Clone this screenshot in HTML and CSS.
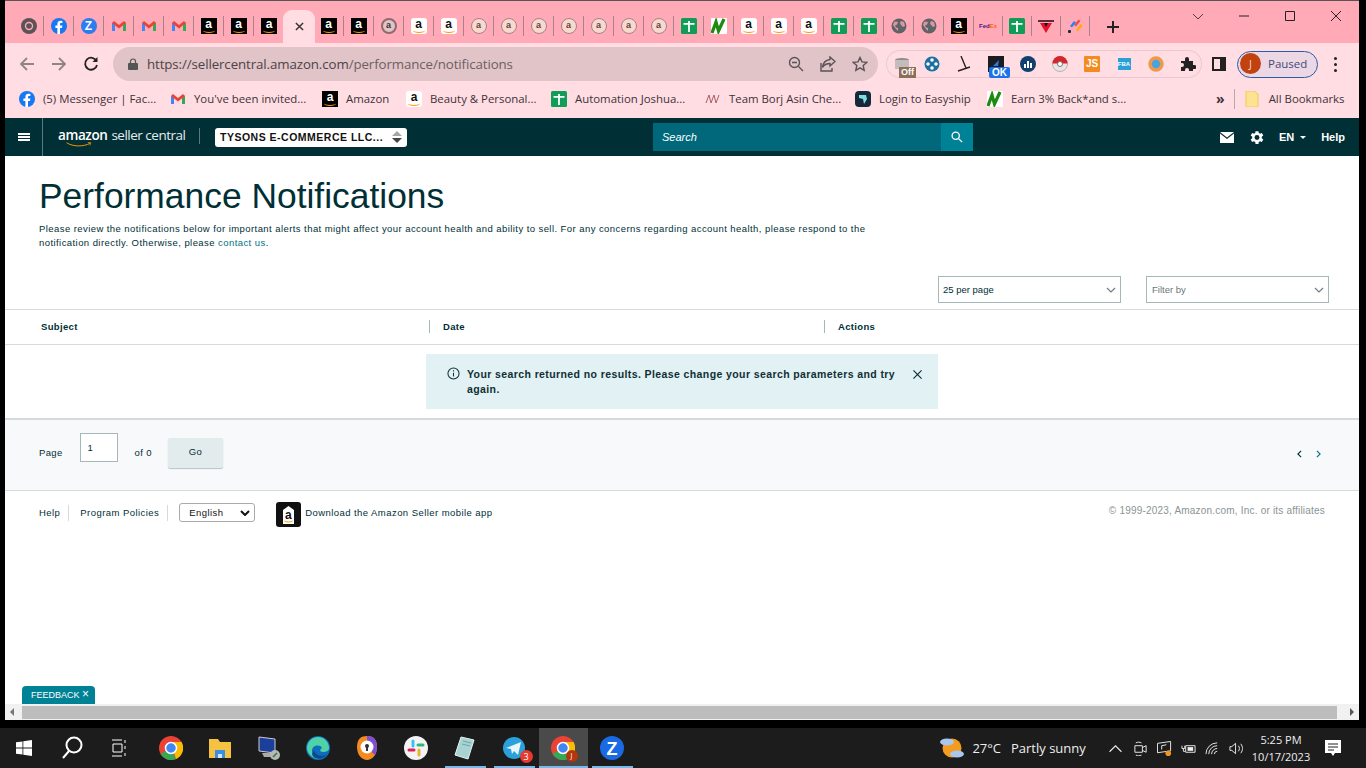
FILE: index.html
```html
<!DOCTYPE html>
<html lang="en">
<head>
  <meta charset="UTF-8" />
  <title>Performance Notifications</title>
  <link rel="stylesheet" href="styles.css">
</head>
<body>
  <!-- shared favicons -->
  <svg class="defs" width="0" height="0">
    <symbol id="i-chrome" viewBox="0 0 16 16"><circle cx="8" cy="8" r="8" fill="#5b5356"/><circle cx="8" cy="8" r="4.2" fill="#ffaab6"/><circle cx="8" cy="8" r="2.8" fill="#5b5356"/></symbol>
    <symbol id="i-fb" viewBox="0 0 16 16"><circle cx="8" cy="8" r="8" fill="#1877f2"/><path d="M9 16V10h2l.4-2.4H9V6.2c0-.8.3-1.2 1.2-1.2h1.2V3c-.5-.1-1.2-.2-1.9-.2-1.9 0-3.1 1.1-3.1 3.2v1.6H4.4V10h2V16z" fill="#fff"/></symbol>
    <symbol id="i-gmail" viewBox="0 0 16 16"><path d="M1 4.5V13h3V7z" fill="#4285f4"/><path d="M15 4.5V13h-3V7z" fill="#34a853"/><path d="M1 5 3 3l5 4 5-4 2 2-7 5.5z" fill="#ea4335"/></symbol>
    <symbol id="i-sheet" viewBox="0 0 16 16"><rect width="16" height="16" rx="1.5" fill="#0f9d58"/><path d="M2.5 5h4.600V3h1.800v2h4.600v1.800H8.900V14H7.100V6.800H2.500z" fill="#fff"/></symbol>
    <symbol id="i-wave" viewBox="0 0 16 16"><rect width="16" height="16" rx="1" fill="#fff"/><path d="M1 15 5 4l2.500 9L13 1" fill="none" stroke="#1d8a12" stroke-width="3.200"/></symbol>
    <symbol id="i-globe" viewBox="0 0 16 16"><circle cx="8" cy="8" r="7.5" fill="#5f6368"/><path d="M3 4c2-1 3-.5 4 .5l-1 2-2 1 1 2 2 .5v3L5 11 2 7zM10 3l3 1 1 4-2 1-2-2-1-2z" fill="#ffaab6" opacity=".75"/></symbol>
    <symbol id="i-tri" viewBox="0 0 16 16"><path d="M0 2h16v2H0z" fill="#5a2b40"/><path d="M2 5h12L8 15z" fill="#e8112d"/><path d="M6 5h4L8 9z" fill="#111"/></symbol>
    <symbol id="i-jira" viewBox="0 0 16 16"><path d="M7 7 11.5 1.500l2 1.500L9 8.500z" fill="#f44e3b"/><path d="M3 8 7 3l2 1.500L5 9.500z" fill="#2684ff"/><path d="M9 12l5-6 1.500 1.500-5 6z" fill="#ffab00"/><rect x="1" y="12" width="3" height="3" rx="1" fill="#172b4d"/></symbol>
    <symbol id="i-smile" viewBox="0 0 44 8"><path d="M1 1c11 7 28 7 40 1" fill="none" stroke="#f90" stroke-width="1.6"/><path d="M37 .5l5 .5-1.500 4.500" fill="none" stroke="#f90" stroke-width="1.2"/></symbol>
  </svg>

  <div class="screen">
    <div class="window">
      <div class="tabstrip">
        <div class="tab"><svg class="fav"><use href="#i-chrome"/></svg></div>
        <div class="tab"><svg class="fav"><use href="#i-fb"/></svg></div>
        <div class="tab"><span class="fav-zoom">Z</span></div>
        <div class="tab"><svg class="fav"><use href="#i-gmail"/></svg></div>
        <div class="tab"><svg class="fav"><use href="#i-gmail"/></svg></div>
        <div class="tab"><svg class="fav"><use href="#i-gmail"/></svg></div>
        <div class="tab"><span class="fav-a black">a</span></div>
        <div class="tab"><span class="fav-a black">a</span></div>
        <div class="tab no-sep"><span class="fav-a black">a</span></div>
        <div class="tab active">
          <svg class="tab-close" viewBox="0 0 10 10"><path d="M1 1l8 8M9 1l-8 8"/></svg>
        </div>
        <div class="tab"><span class="fav-a black">a</span></div>
        <div class="tab"><span class="fav-a black">a</span></div>
        <div class="tab"><span class="fav-a ring dark">a</span></div>
        <div class="tab"><span class="fav-a white">a</span></div>
        <div class="tab"><span class="fav-a white">a</span></div>
        <div class="tab"><span class="fav-a ring">a</span></div>
        <div class="tab"><span class="fav-a ring">a</span></div>
        <div class="tab"><span class="fav-a ring">a</span></div>
        <div class="tab"><span class="fav-a ring">a</span></div>
        <div class="tab"><span class="fav-a ring">a</span></div>
        <div class="tab"><span class="fav-a ring">a</span></div>
        <div class="tab"><span class="fav-a ring">a</span></div>
        <div class="tab"><svg class="fav"><use href="#i-sheet"/></svg></div>
        <div class="tab"><svg class="fav"><use href="#i-wave"/></svg></div>
        <div class="tab"><span class="fav-a white">a</span></div>
        <div class="tab"><span class="fav-a white">a</span></div>
        <div class="tab"><span class="fav-a white">a</span></div>
        <div class="tab"><svg class="fav"><use href="#i-sheet"/></svg></div>
        <div class="tab"><svg class="fav"><use href="#i-sheet"/></svg></div>
        <div class="tab"><svg class="fav"><use href="#i-globe"/></svg></div>
        <div class="tab"><svg class="fav"><use href="#i-globe"/></svg></div>
        <div class="tab"><span class="fav-a black">a</span></div>
        <div class="tab narrow"><span class="fav-fedex">Fed<b>Ex</b></span></div>
        <div class="tab narrow"><svg class="fav"><use href="#i-sheet"/></svg></div>
        <div class="tab narrow"><svg class="fav"><use href="#i-tri"/></svg></div>
        <div class="tab narrow"><svg class="fav"><use href="#i-jira"/></svg></div>
        <svg class="new-tab" viewBox="0 0 12 12"><path d="M6 0v12M0 6h12"/></svg>
        <div class="win-controls">
          <div class="win-btn"><svg viewBox="0 0 10 10"><path d="M0 3l5 5 5-5"/></svg></div>
          <div class="win-btn"><svg viewBox="0 0 10 10"><path d="M0 5h10"/></svg></div>
          <div class="win-btn"><svg viewBox="0 0 10 10"><path d="M.5.5h9v9h-9z"/></svg></div>
          <div class="win-btn"><svg viewBox="0 0 10 10"><path d="M0 0l10 10M10 0L0 10"/></svg></div>
        </div>
      </div>

      <div class="toolbar">
        <svg class="tool-btn dim" viewBox="0 0 16 16"><path d="M15 8H2M8 2L2 8l6 6"/></svg>
        <svg class="tool-btn dim" viewBox="0 0 16 16"><path d="M1 8h13M8 2l6 6-6 6"/></svg>
        <svg class="tool-btn" viewBox="0 0 16 16"><path d="M13.5 5A6 6 0 1 0 14 9"/><path class="solid" d="M14.5 1v5h-5z"/></svg>
        <div class="omnibox">
          <svg class="lock" viewBox="0 0 10 12"><path d="M2.5 5V3.500a2.500 2.500 0 0 1 5 0V5" fill="none" stroke="#555" stroke-width="1.2"/><rect y="5" width="10" height="7" rx="1" fill="#555"/></svg>
          <span class="url"><span class="url-host">https://sellercentral.amazon.com</span>/performance/notifications</span>
          <svg class="omni-icon" viewBox="0 0 16 16"><circle cx="6.5" cy="6.5" r="5"/><path d="M10.5 10.5L15 15M4 6.500h5"/></svg>
          <svg class="omni-icon" viewBox="0 0 16 16"><path d="M10 1l5 4.500L10 10V7.500C6 7.500 4 9 2.500 11.500 3 7 6 4 10 3.500z"/><path d="M1 7v8h11v-3"/></svg>
          <svg class="omni-icon" viewBox="0 0 16 16"><path d="M8 1.500l2 4.400 4.800.5-3.600 3.200 1 4.700L8 11.900l-4.200 2.400 1-4.700L1.200 6.400 6 5.900z"/></svg>
        </div>
        <div class="ext-pill">
          <div class="ext ext-first">
            <svg viewBox="0 0 16 16"><ellipse cx="8" cy="4" rx="7" ry="2" fill="#8c8c8c"/><rect x="1" y="4" width="14" height="9" fill="#c4bcbc"/></svg>
            <span class="badge badge-off">Off</span>
          </div>
          <div class="ext"><svg viewBox="0 0 16 16"><circle cx="8" cy="8" r="7.5" fill="#1d6f9f"/><circle cx="8" cy="4" r="1.8" fill="#fff"/><circle cx="8" cy="12" r="1.8" fill="#fff"/><circle cx="4" cy="8" r="1.8" fill="#fff"/><circle cx="12" cy="8" r="1.8" fill="#fff"/></svg></div>
          <div class="ext"><svg viewBox="0 0 16 16"><path d="M5 0l5 12M2 15l12-4" fill="none" stroke="#222" stroke-width="1.4"/></svg></div>
          <div class="ext">
            <svg viewBox="0 0 16 16"><rect width="16" height="16" fill="#1b1b22"/><path d="M5 10l6-6-1 6z" fill="#2a7fd5"/></svg>
            <span class="badge badge-ok">OK</span>
          </div>
          <div class="ext"><svg viewBox="0 0 16 16"><circle cx="8" cy="8" r="8" fill="#123f6d"/><path d="M4 8h2v4H4zM7 5h2v7H7zM10 7h2v5h-2z" fill="#fff"/></svg></div>
          <div class="ext"><svg viewBox="0 0 16 16"><circle cx="8" cy="8" r="7.5" fill="#e9e4e5" stroke="#b9b0b2"/><path d="M.5 7.500a7.500 7.500 0 0 1 15 0z" fill="#d8232a"/><circle cx="8" cy="8" r="2.5" fill="#fff" stroke="#777"/></svg></div>
          <div class="ext"><span class="js-box">JS</span></div>
          <div class="ext"><span class="fba-box">FBA</span></div>
          <div class="ext"><svg viewBox="0 0 16 16"><circle cx="8" cy="8" r="6" fill="#4aa3df" stroke="#ec9a4c" stroke-width="3.5"/></svg></div>
          <div class="ext"><svg viewBox="0 0 16 16"><path d="M1 5h4V3a2 2 0 0 1 4 0v2h4v4h1.500a2 2 0 0 1 0 4H13v2H9v-1a2 2 0 0 0-4 0v1H1v-4h1a2 2 0 0 0 0-4H1z" fill="#222"/></svg></div>
        </div>
        <svg class="side-panel" viewBox="0 0 14 14"><path d="M0 0h14v14H0z" fill="#222"/><path d="M2 2h6v10H2z" fill="#ffdde3"/></svg>
        <div class="profile">
          <span class="avatar">J</span>
          <span class="paused">Paused</span>
        </div>
        <div class="kebab"><i></i><i></i><i></i></div>
      </div>

      <div class="bookmarks">
        <div class="bm"><svg class="fav"><use href="#i-fb"/></svg><span>(5) Messenger | Fac...</span></div>
        <div class="bm"><svg class="fav"><use href="#i-gmail"/></svg><span>You've been invited...</span></div>
        <div class="bm"><span class="fav-a black">a</span><span>Amazon</span></div>
        <div class="bm"><span class="fav-a white">a</span><span>Beauty &amp; Personal...</span></div>
        <div class="bm"><svg class="fav"><use href="#i-sheet"/></svg><span>Automation Joshua...</span></div>
        <div class="bm"><svg class="fav" viewBox="0 0 16 16"><path d="M1 12l3-8 2 8 3-8 2 8 3-8" fill="none" stroke="#a6606a" stroke-width="1"/></svg><span>Team Borj Asin Che...</span></div>
        <div class="bm"><svg class="fav" viewBox="0 0 16 16"><rect width="16" height="16" rx="4" fill="#14293b"/><path d="M4 4h7l1 4-3 5-1-5-4-1z" fill="#7fdde0"/></svg><span>Login to Easyship</span></div>
        <div class="bm"><svg class="fav"><use href="#i-wave"/></svg><span>Earn 3% Back*and s...</span></div>
        <div class="bm-end">
          <span class="more">»</span>
          <span class="bm-sep"></span>
          <svg class="fav" viewBox="0 0 16 16"><path d="M2 0h8l4 3v13H2z" fill="#fde293" stroke="#f2c94c"/></svg>
          <span>All Bookmarks</span>
        </div>
      </div>

      <header class="nav">
        <div class="nav-menu"><span class="burger"><i></i><i></i><i></i></span></div>
        <div class="logo">
          <span class="logo-amazon">amazon<svg class="logo-smile"><use href="#i-smile"/></svg></span>
          <span class="logo-rest">seller central</span>
        </div>
        <div class="acct">
          <span class="acct-name">TYSONS E-COMMERCE LLC...</span>
          <span class="acct-arrows"><i class="up"></i><i class="down"></i></span>
        </div>
        <div class="search">
          <span class="search-text">Search</span>
          <span class="search-btn">
            <svg viewBox="0 0 14 14"><circle cx="5.5" cy="5.5" r="4.2"/><path d="M8.7 8.700L13 13"/></svg>
          </span>
        </div>
        <div class="nav-right">
          <svg class="nav-mail" viewBox="0 0 14 11"><path d="M0 0h14L7 5.500z"/><path d="M0 1.500v9.500h14V1.500L7 7z"/></svg>
          <svg class="nav-gear" viewBox="0 0 24 24"><path d="M19.4 13a7.500 7.500 0 0 0 0-2l2.200-1.700-2.100-3.600-2.600 1a7.500 7.500 0 0 0-1.700-1L14.800 3h-4.200l-.4 2.700a7.500 7.500 0 0 0-1.700 1l-2.600-1-2.100 3.600L6 11a7.500 7.500 0 0 0 0 2l-2.200 1.700 2.100 3.600 2.600-1a7.500 7.500 0 0 0 1.700 1l.4 2.700h4.200l.4-2.700a7.500 7.500 0 0 0 1.700-1l2.600 1 2.100-3.600zM12.700 15.500a3.500 3.500 0 1 1 0-7 3.500 3.500 0 0 1 0 7z" fill-rule="evenodd"/></svg>
          <span class="nav-lang">EN</span><span class="caret"></span>
          <span class="nav-help">Help</span>
        </div>
      </header>

      <main class="content">
        <div class="head">
          <h1>Performance Notifications</h1>
          <p class="intro">Please review the notifications below for important alerts that might affect your account health and ability to sell. For any concerns regarding account health, please respond to the notification directly. Otherwise, please <a href="#">contact us</a>.</p>
        </div>

        <div class="filters">
          <div class="dropdown"><span>25 per page</span><svg viewBox="0 0 10 6"><path d="M1 1l4 4 4-4"/></svg></div>
          <div class="dropdown muted"><span>Filter by</span><svg viewBox="0 0 10 6"><path d="M1 1l4 4 4-4"/></svg></div>
        </div>

        <div class="table-head">
          <div class="col col-subject">Subject</div>
          <div class="col col-date">Date</div>
          <div class="col col-actions">Actions</div>
        </div>

        <div class="results">
          <div class="alert">
            <svg class="alert-info" viewBox="0 0 14 14"><circle cx="7" cy="7" r="6"/><path d="M7 6.300v4M7 3.500v1.300"/></svg>
            <p>Your search returned no results. Please change your search parameters and try again.</p>
            <svg class="alert-close" viewBox="0 0 10 10"><path d="M.5.500l9 9M9.500.500l-9 9"/></svg>
          </div>
        </div>

        <div class="pager">
          <span>Page</span>
          <span class="page-input">1</span>
          <span class="page-of">of 0</span>
          <span class="go-btn">Go</span>
          <div class="pager-arrows">
            <svg class="arrow-prev" viewBox="0 0 6 10"><path d="M5 1L1 5l4 4"/></svg>
            <svg class="arrow-next" viewBox="0 0 6 10"><path d="M1 1l4 4-4 4"/></svg>
          </div>
        </div>

        <footer class="foot">
          <a href="#" class="foot-link">Help</a>
          <a href="#" class="foot-link">Program Policies</a>
          <div class="lang-select"><span>English</span><svg viewBox="0 0 10 6"><path d="M1 1l4 4 4-4"/></svg></div>
          <svg class="app-icon" viewBox="0 0 25 25">
            <rect width="25" height="25" rx="3" fill="#111"/>
            <path d="M7 8l5.500-4L18 8v14H7z" fill="#fff"/>
            <text x="12.5" y="17" text-anchor="middle" class="sym-bold" font-size="12" fill="#111">a</text>
            <path d="M8.500 19c2 1.300 6 1.300 8 0" fill="none" stroke="#f90"/>
          </svg>
          <span class="app-text">Download the Amazon Seller mobile app</span>
          <span class="copyright">© 1999-2023, Amazon.com, Inc. or its affiliates</span>
        </footer>

        <div class="feedback">FEEDBACK <span>×</span></div>
      </main>

      <div class="hscroll">
        <span class="scroll-arrow left"></span>
        <span class="scroll-thumb"></span>
        <span class="scroll-arrow right"></span>
      </div>
    </div>

    <div class="taskbar">
      <div class="task-apps">
        <div class="task sys"><svg viewBox="0 0 16 16" class="win-logo"><path d="M0 2.300l6.500-.9v6.200H0zM7.300 1.300L16 0v7.600H7.300zM0 8.400h6.500v6.200L0 13.700zM7.300 8.400H16V16l-8.700-1.200z"/></svg></div>
        <div class="task sys"><svg viewBox="0 0 22 24" class="t-search"><circle cx="13" cy="9" r="7.5"/><path d="M8 15l-6 7"/></svg></div>
        <div class="task sys"><svg viewBox="0 0 16 18" class="t-view"><path d="M0 1h10M0 17h10M1 5h9v8H1zM13 1v3M13 7v3M13 14v3"/></svg></div>
        <div class="task first-app"><svg viewBox="0 0 24 24"><circle cx="12" cy="12" r="12" fill="#ea4335"/><path d="M12 12L1.500 18A12 12 0 0 0 17 23z" fill="#34a853"/><path d="M12 6h10.500A12 12 0 0 1 17 23z" fill="#fbbc05"/><circle cx="12" cy="12" r="5.5" fill="#4285f4" stroke="#fff" stroke-width="1.5"/></svg></div>
        <div class="task"><svg viewBox="0 0 24 24"><path d="M1 3h9l2 3h11v16H1z" fill="#f5c242"/><path d="M7 14h10v8H7z" fill="#3a8ee6"/><path d="M10 18h4v4h-4z" fill="#cfe6fb"/></svg></div>
        <div class="task"><svg viewBox="0 0 24 24"><path d="M2 1l16 2v14L2 15z" fill="#1c3f9c" stroke="#ccc"/><path d="M5 17h9l2 4H7z" fill="#aaa"/><circle cx="18" cy="19" r="5" fill="#b7b7b7"/><path d="M16 21l4-4" stroke="#2b7a2b" stroke-width="1.5"/></svg></div>
        <div class="task"><svg viewBox="0 0 24 24"><circle cx="12" cy="12" r="12" fill="#0f6cbd"/><path d="M1 12a11 11 0 0 1 22 0c0 3-3 4-6 4-4 0-3-3-1-4-2-4-10-3-10 3 0 3 2 7 7 8C7 23 1 18 1 12z" fill="#4fd2a8"/><path d="M8 14c1 5 8 8 13 4-4 6-14 6-15 0z" fill="#0b4b8c"/></svg></div>
        <div class="task"><svg viewBox="0 0 24 24"><path d="M12 0c6 0 10 3 10 11s-5 13-10 13S2 19 2 11 6 0 12 0z" fill="#f58a1f"/><path d="M12 0c6 0 10 3 10 11 0 3-1 6-2 8L12 12z" fill="#7d4fd3"/><circle cx="12" cy="11" r="6.5" fill="#fff"/><circle cx="12" cy="10" r="2" fill="#333"/><path d="M11 11h2v4h-2z" fill="#333"/></svg></div>
        <div class="task"><svg viewBox="0 0 24 24"><circle cx="12" cy="12" r="12" fill="#f4f4f4"/><path d="M9 5v5" stroke="#36c5f0" stroke-width="3" stroke-linecap="round"/><path d="M14 9h5" stroke="#2eb67d" stroke-width="3" stroke-linecap="round"/><path d="M15 19v-5" stroke="#ecb22e" stroke-width="3" stroke-linecap="round"/><path d="M5 14h5" stroke="#e01e5a" stroke-width="3" stroke-linecap="round"/></svg></div>
        <div class="task running"><svg viewBox="0 0 24 24"><path d="M8 1l13 3-6 19-13-4z" fill="#a9d3d3" stroke="#e6f2f2"/><path d="M10 5l8 2M9 8l8 2" stroke="#6fa3a3"/></svg></div>
        <div class="task running">
          <svg viewBox="0 0 24 24"><circle cx="12" cy="12" r="11" fill="#2aa1da"/><path d="M4 12l15-6-3 13-4-4-2 3-1-5z" fill="#e8f6fc"/></svg>
          <span class="task-badge">3</span>
        </div>
        <div class="task running current">
          <svg viewBox="0 0 24 24"><circle cx="12" cy="12" r="12" fill="#ea4335"/><path d="M12 12L1.500 18A12 12 0 0 0 17 23z" fill="#34a853"/><path d="M12 6h10.500A12 12 0 0 1 17 23z" fill="#fbbc05"/><circle cx="12" cy="12" r="5.5" fill="#4285f4" stroke="#fff" stroke-width="1.5"/></svg>
          <span class="task-avatar">J</span>
        </div>
        <div class="task running"><svg viewBox="0 0 24 24"><circle cx="12" cy="12" r="12" fill="#1a6ae4"/><text x="12" y="18.5" text-anchor="middle" class="sym-bold" font-size="18" fill="#fff">Z</text></svg></div>
      </div>

      <div class="tray">
        <svg class="weather" viewBox="0 0 26 24"><circle cx="13" cy="12" r="9.5" fill="#f39c1f"/><ellipse cx="8" cy="6" rx="7" ry="3.5" fill="#a9c6ee"/><ellipse cx="18" cy="18" rx="7" ry="3.5" fill="#a9c6ee"/></svg>
        <span class="temp">27°C</span>
        <span class="sky">Partly sunny</span>
        <svg class="tray-icon chevron" viewBox="0 0 12 7"><path d="M.5 6.500L6 1l5.500 5.500"/></svg>
        <svg class="tray-icon" viewBox="0 0 14 16"><path d="M1 5h8v7H1zM9 7l4-2v7l-4-2M2 2c2-1 4-1 6 0M2 15c2 1 4 1 6 0"/></svg>
        <svg class="tray-icon" viewBox="0 0 16 16"><path d="M.5 2.500l14-2v10l-14 2zM5 9V5l5-1"/><circle class="dot-orange" cx="12" cy="13" r="3"/></svg>
        <svg class="tray-icon" viewBox="0 0 16 12"><path d="M5 3h10v7H5zM1 3v3h3V3M2.500 6v3h2"/><path class="solid" d="M7 4.500h6v4H7z"/></svg>
        <svg class="tray-icon" viewBox="0 0 16 14"><path d="M1 13A12 12 0 0 1 13 1M4 13a9 9 0 0 1 9-9M7 13a6 6 0 0 1 6-6M10 13a3 3 0 0 1 3-3"/></svg>
        <svg class="tray-icon" viewBox="0 0 16 14"><path d="M1 5v4h2l4 3.500v-11L3 5zM10 4c1.500 2 1.500 4 0 6M12.500 2c2.500 3 2.500 7 0 10"/></svg>
        <div class="clock"><span>5:25 PM</span><span>10/17/2023</span></div>
        <svg class="notify" viewBox="0 0 16 16"><path d="M0 0h16v13h-6l-2 3-2-3H0z" fill="#fff"/><path d="M3 4h10M3 7h10M3 10h6" stroke="#222"/></svg>
      </div>
    </div>
  </div>
</body>
</html>
```

FILE: styles.css
```css
* {
  box-sizing: border-box;
}

html,
body {
  margin: 0;
  height: 100%;
  overflow: hidden;
  background: #000;
}

body {
  font-family: 'Liberation Sans', Arial, sans-serif;
  color: #002f36;
}

.defs {
  position: absolute;
}

.sym-bold {
  font-family: 'Liberation Sans', Arial, sans-serif;
  font-weight: bold;
}

.screen {
  width: 1366px;
  height: 768px;
  display: flex;
  flex-direction: column;
}

.window {
  width: 1354px;
  height: 720px;
  margin-left: 5px;
  margin-bottom: 8px;
  display: flex;
  flex-direction: column;
  background: #fff;
}

/* browser tabs */
.tabstrip {
  height: 43px;
  flex: none;
  display: flex;
  padding-left: 9px;
  background: #ffaab6;
  border-top: 1px solid #555;
}

.tab {
  width: 30px;
  height: 20px;
  margin-top: 15px;
  display: flex;
  align-items: center;
  justify-content: center;
  border-right: 1px solid #a8828a;
}

.tab.narrow {
  width: 29px;
}

.tab.no-sep {
  border-right: none;
}

.tab.active {
  height: 33px;
  margin-top: 9px;
  border-right: none;
  border-radius: 9px 9px 0 0;
  background: #ffdde3;
  width: 32px;
  margin-left: -1px;
  margin-right: -1px;
  position: relative;
}

.fav {
  width: 16px;
  height: 16px;
  flex: none;
}

/* favicons that carry a real letter */
.fav-a {
  width: 16px;
  height: 16px;
  flex: none;
  position: relative;
  text-align: center;
  font: bold 12px/13px 'Liberation Sans', sans-serif;
}

.fav-a::after {
  content: "";
  position: absolute;
  left: 2px;
  right: 2px;
  bottom: 1px;
  height: 4px;
  border-bottom: 1.5px solid #f90;
  border-radius: 50%;
}

.fav-a.black {
  background: #000;
  color: #fff;
}

.fav-a.white {
  background: #fff;
  color: #111;
  border-radius: 3px;
}

.fav-a.ring {
  border: 1.5px solid #a4828a;
  border-radius: 50%;
  background: #f9d8cd;
  color: #5a4648;
  font-size: 9px;
  line-height: 12px;
}

.fav-a.ring.dark {
  border: 2px solid #8d6a70;
  background: #e3c3c3;
  color: #333;
  line-height: 11px;
}

.fav-a.ring::after {
  display: none;
}

.fav-zoom {
  width: 16px;
  height: 16px;
  flex: none;
  border-radius: 50%;
  background: #2d7cf0;
  color: #fff;
  text-align: center;
  font: bold 12px/16px 'Liberation Sans', sans-serif;
}

.fav-fedex {
  width: 18px;
  flex: none;
  color: #4d148c;
  text-align: center;
  white-space: nowrap;
  font: bold 6px/16px 'Liberation Sans', sans-serif;
}

.fav-fedex b {
  color: #f60;
}

.tab-close {
  width: 9px;
  height: 9px;
  fill: none;
  stroke: #333;
  stroke-width: 1.6;
}

.new-tab {
  width: 12px;
  height: 12px;
  margin: 20px 0 0 17px;
  fill: none;
  stroke: #222;
  stroke-width: 2;
}

.win-controls {
  margin-left: auto;
  display: flex;
  align-self: flex-start;
}

.win-btn {
  width: 46px;
  height: 29px;
  display: flex;
  align-items: center;
  justify-content: center;
}

.win-btn svg {
  width: 10px;
  height: 10px;
  fill: none;
  stroke: #222;
  stroke-width: 1;
}

.win-btn:first-child svg {
  stroke-width: .8;
}

/* address bar */
.toolbar {
  height: 38px;
  flex: none;
  display: flex;
  align-items: center;
  padding: 4px 0 0 14px;
  background: #ffdde3;
  font-family: 'Open Sans', sans-serif;
}

.tool-btn {
  width: 16px;
  height: 16px;
  margin-right: 16px;
  fill: none;
  stroke: #222;
  stroke-width: 1.8;
}

.tool-btn.dim {
  stroke: #8f8589;
}

.tool-btn .solid {
  fill: #222;
  stroke: none;
}

.omnibox {
  width: 765px;
  height: 34px;
  margin-left: -2px;
  padding: 0 10px 0 15px;
  display: flex;
  align-items: center;
  border-radius: 17px;
  background: #e0c4c8;
}

.lock {
  width: 10px;
  height: 12px;
  margin-right: 9px;
}

.url {
  flex: 1;
  font-size: 13.3px;
  color: #6e5f63;
  letter-spacing: -.1px;
}

.url-host {
  color: #4d4346;
}

.omni-icon {
  width: 16px;
  height: 16px;
  margin-left: 16px;
  fill: none;
  stroke: #5a5256;
  stroke-width: 1.4;
}

.ext-pill {
  width: 316px;
  height: 28px;
  margin-left: 8px;
  display: flex;
  align-items: center;
  border: 1px solid #ecc8cf;
  border-left-color: #e8cdd2;
  border-radius: 14px;
}

.ext {
  width: 32px;
  height: 26px;
  flex: none;
  display: flex;
  align-items: center;
  justify-content: center;
  position: relative;
}

.ext-first {
  width: 29px;
}

.ext svg {
  width: 16px;
  height: 16px;
}

.badge {
  position: absolute;
  bottom: -1px;
  right: 2px;
  padding: 0 2px;
  font-family: 'Liberation Sans', sans-serif;
  font-size: 9px;
  line-height: 11px;
  font-weight: bold;
  color: #fff;
}

.badge-off {
  background: #8a7058;
  right: 0;
}

.badge-ok {
  background: #1a73e8;
  border-radius: 2px;
  font-size: 10px;
  padding: 0 3px;
}

.js-box {
  width: 16px;
  height: 16px;
  background: #f28b20;
  color: #fff;
  border-radius: 1px;
  font: bold 10px/16px 'Liberation Sans', sans-serif;
  text-align: center;
}

.fba-box {
  width: 13px;
  height: 12px;
  background: #2aa0d8;
  color: #fff;
  font: bold 6px/12px 'Liberation Sans', sans-serif;
  text-align: center;
}

.side-panel {
  width: 14px;
  height: 14px;
  margin-left: 10px;
}

.profile {
  width: 81px;
  height: 27px;
  margin-left: 11px;
  display: flex;
  align-items: center;
  padding: 0 0 1px 2px;
  border: 1px solid #2a5caa;
  border-radius: 14px;
  background: #ecd8e4;
}

.avatar {
  width: 21px;
  height: 21px;
  border-radius: 50%;
  background: #c1410f;
  color: #f6d5c8;
  font-size: 11px;
  line-height: 21px;
  text-align: center;
}

.paused {
  margin-left: 7px;
  font-size: 11.5px;
  color: #444a7a;
}

.kebab {
  margin-left: 16px;
  display: flex;
  flex-direction: column;
  gap: 3px;
}

.kebab i {
  width: 3px;
  height: 3px;
  border-radius: 50%;
  background: #222;
}

/* bookmarks bar */
.bookmarks {
  height: 37px;
  flex: none;
  display: grid;
  grid-template-columns: 151px 152px 84px 145px 154px 150px 132px 229px 1fr;
  align-items: center;
  padding: 0 0 2px 14px;
  background: #ffdde3;
  font-family: 'Open Sans', sans-serif;
  font-size: 11.4px;
  color: #3c3338;
}

.bm {
  display: flex;
  align-items: center;
  gap: 8px;
  white-space: nowrap;
}

.bm-end {
  display: flex;
  align-items: center;
  gap: 9px;
  white-space: nowrap;
}

.more {
  font-weight: bold;
  font-size: 14px;
}

.bm-sep {
  width: 1px;
  height: 20px;
  background: #bda6ab;
}

/* seller central nav */
.nav {
  height: 38px;
  flex: none;
  display: flex;
  align-items: center;
  background: #002f36;
  color: #fff;
  position: relative;
}

.nav-menu {
  width: 38px;
  height: 100%;
  display: flex;
  align-items: center;
  justify-content: center;
  border-right: 1px solid #5b7a7f;
}

.burger {
  display: flex;
  flex-direction: column;
  gap: 1px;
}

.burger i {
  width: 12px;
  height: 2px;
  background: #fff;
}

.logo {
  width: 142px;
  margin-left: 15px;
  display: flex;
  align-items: baseline;
  gap: 4px;
  white-space: nowrap;
  position: relative;
  top: -1px;
  font-family: 'Open Sans', sans-serif;
  border-right: 1px solid #5b7a7f;
  height: 16px;
  line-height: 15px;
}

.logo-amazon {
  font-size: 13.5px;
  font-weight: 600;
  letter-spacing: -.4px;
  position: relative;
}

.logo-smile {
  position: absolute;
  left: 8px;
  top: 14px;
  width: 26px;
  height: 5px;
}

.logo-rest {
  font-size: 13.5px;
  font-weight: 400;
  letter-spacing: -.5px;
  color: #e6ecec;
}

.acct {
  width: 192px;
  height: 19px;
  margin-left: 15px;
  display: flex;
  align-items: center;
  justify-content: space-between;
  padding: 0 3px 0 5px;
  border-radius: 3px;
  background: #fff;
  color: #111;
}

.acct-name {
  font-size: 10.5px;
  font-weight: bold;
  letter-spacing: .5px;
  white-space: nowrap;
}

.acct-arrows {
  display: flex;
  flex-direction: column;
  gap: 2px;
  padding: 0 2px;
}

.acct-arrows i {
  width: 0;
  height: 0;
  border-left: 5px solid transparent;
  border-right: 5px solid transparent;
}

.acct-arrows .up {
  border-bottom: 5px solid #a0a8ab;
}

.acct-arrows .down {
  border-top: 5px solid #444;
}

.search {
  width: 320px;
  height: 28px;
  margin-left: 246px;
  display: flex;
  align-items: center;
  background: #00687a;
}

.search-text {
  flex: 1;
  padding-left: 9px;
  font-size: 11px;
  font-style: italic;
}

.search-btn {
  width: 32px;
  height: 100%;
  display: flex;
  align-items: center;
  justify-content: center;
  background: #008296;
}

.search-btn svg {
  width: 12px;
  height: 12px;
  fill: none;
  stroke: #fff;
  stroke-width: 1.5;
}

.nav-right {
  margin-left: auto;
  display: flex;
  align-items: center;
  padding-right: 14px;
  font-size: 11px;
  font-weight: bold;
}

.nav-mail {
  width: 14px;
  height: 11px;
  fill: #fff;
}

.nav-gear {
  width: 17px;
  height: 17px;
  margin-left: 14px;
  fill: #fff;
}

.nav-lang {
  margin-left: 14px;
}

.caret {
  margin-left: 6px;
  border-left: 3.5px solid transparent;
  border-right: 3.5px solid transparent;
  border-top: 3.5px solid #fff;
}

.nav-help {
  margin-left: 15px;
}

/* page body */
.content {
  flex: 1;
  position: relative;
}

.head {
  padding: 21px 0 0 34px;
  height: 120px;
}

h1 {
  margin: 0;
  font-size: 35.4px;
  line-height: 39px;
  font-weight: normal;
  color: #002f36;
}

.intro {
  width: 840px;
  margin: 6px 0 0;
  font-size: 9.5px;
  line-height: 14px;
  color: #002f36;
  letter-spacing: .43px;
}

.intro a {
  color: #007185;
  text-decoration: none;
}

.filters {
  height: 33px;
  display: flex;
  justify-content: flex-end;
  gap: 25px;
  padding-right: 30px;
}

.dropdown {
  width: 183px;
  height: 27px;
  display: flex;
  align-items: center;
  justify-content: space-between;
  padding: 0 4px 0 5px;
  border: 1px solid #a6b7ba;
  font-size: 9.5px;
}

.dropdown:first-child {
  padding-left: 4px;
}

.dropdown.muted {
  color: #6c7778;
}

.dropdown svg {
  width: 10px;
  height: 6px;
  fill: none;
  stroke: #6c7f83;
  stroke-width: 1.2;
}

.table-head {
  height: 36px;
  display: grid;
  grid-template-columns: 424px 395px 1fr;
  align-items: center;
  padding-bottom: 1px;
  border-top: 1px solid #d5dbdb;
  border-bottom: 1px solid #d5dbdb;
  font-size: 9.5px;
  font-weight: bold;
  letter-spacing: .33px;
}

.col {
  padding-left: 13px;
  line-height: 13px;
  border-left: 1px solid #a6b7ba;
}

.col-subject {
  padding-left: 36px;
  border-left: none;
}

.results {
  height: 73px;
  display: flex;
  justify-content: center;
  padding-top: 9px;
}

.alert {
  width: 512px;
  height: 55px;
  display: flex;
  padding: 13px 16px 0 21px;
  background: #e2f1f3;
}

.alert p {
  margin: 0 0 0 7px;
  flex: 1;
  font-size: 10.5px;
  line-height: 15px;
  font-weight: bold;
  letter-spacing: .4px;
  color: #0f2f35;
}

.alert-info {
  width: 13px;
  height: 13px;
  flex: none;
  fill: none;
  stroke: #0f2f35;
  stroke-width: 1.1;
}

.alert-close {
  width: 9px;
  height: 9px;
  margin: 3px 0 0 14px;
  flex: none;
  fill: none;
  stroke: #0f2f35;
  stroke-width: 1.3;
}

.pager {
  height: 73px;
  display: flex;
  align-items: flex-start;
  padding-left: 34px;
  border-top: 2px solid #d5dbdb;
  border-bottom: 1px solid #d5dbdb;
  background: #f8f9fa;
  font-size: 9.5px;
  letter-spacing: .35px;
}

.pager > span:first-child {
  margin-top: 27px;
}

.page-input {
  width: 38px;
  height: 29px;
  margin: 13px 0 0 17px;
  padding: 8px 0 0 7px;
  border: 1px solid #a6b7ba;
  background: #fff;
}

.page-of {
  margin: 27px 0 0 17px;
}

.go-btn {
  width: 55px;
  height: 30px;
  margin: 18px 0 0 16px;
  border-radius: 2px;
  background: #e3ecec;
  box-shadow: 0 1px 1px #b8c4c4;
  text-align: center;
  line-height: 27px;
}

.pager-arrows {
  margin-left: auto;
  margin-top: 30px;
  padding-right: 38px;
  display: flex;
  gap: 14px;
}

.arrow-prev,
.arrow-next {
  width: 5px;
  height: 8px;
  fill: none;
  stroke: #002f36;
  stroke-width: 1.4;
}

.arrow-next {
  stroke: #007185;
}

.foot {
  display: flex;
  align-items: flex-start;
  padding: 11px 34px 0;
  font-size: 9.5px;
  letter-spacing: .44px;
}

.foot-link {
  height: 16px;
  margin-top: 3px;
  padding-right: 8px;
  margin-right: 11px;
  border-right: 1px solid #d5dbdb;
  color: #002f36;
  text-decoration: none;
  line-height: 15px;
}

.lang-select {
  width: 76px;
  height: 19px;
  margin-top: 1px;
  padding: 0 4px 0 9px;
  display: flex;
  align-items: center;
  justify-content: space-between;
  border: 1px solid #aaa;
  border-radius: 3px;
  color: #111;
}

.lang-select svg {
  width: 10px;
  height: 6px;
  fill: none;
  stroke: #111;
  stroke-width: 2;
}

.app-icon {
  width: 25px;
  height: 25px;
  margin-left: 21px;
  flex: none;
}

.app-text {
  margin: 5px 0 0 4px;
}

.copyright {
  margin-left: auto;
  margin-top: 3px;
  color: #8a9495;
  font-size: 10px;
  letter-spacing: .2px;
}

.feedback {
  position: absolute;
  left: 17px;
  bottom: 0;
  width: 73px;
  height: 18px;
  padding-left: 9px;
  border-radius: 4px 4px 0 0;
  background: #008296;
  color: #fff;
  font-size: 9px;
  line-height: 18px;
}

.feedback span {
  font-size: 12px;
  line-height: 12px;
}

/* window scrollbar */
.hscroll {
  height: 16px;
  flex: none;
  display: flex;
  align-items: center;
  background: #f1f1f1;
}

.scroll-thumb {
  flex: 1;
  height: 13px;
  margin: 0 13px 0 8px;
  background: #bdbdbd;
}

.scroll-arrow {
  border-top: 4px solid transparent;
  border-bottom: 4px solid transparent;
}

.scroll-arrow.left {
  margin-left: 5px;
  border-right: 4px solid #777;
}

.scroll-arrow.right {
  margin-right: 5px;
  border-left: 4px solid #555;
}

/* windows taskbar */
.taskbar {
  height: 40px;
  flex: none;
  display: flex;
  align-items: center;
  background: #1c1c1c;
  color: #fff;
  font-family: 'Open Sans', sans-serif;
}

.task-apps {
  display: flex;
  height: 100%;
}

.task {
  width: 49px;
  height: 100%;
  display: flex;
  align-items: center;
  justify-content: center;
  position: relative;
}

.task.sys {
  width: 48px;
}

.task.first-app {
  margin-left: 2.5px;
}

.task svg {
  width: 24px;
  height: 24px;
}

.task .win-logo {
  width: 16px;
  height: 16px;
  fill: #fff;
}

.t-search {
  fill: none;
  stroke: #fff;
  stroke-width: 2;
}

.task .t-view {
  width: 16px;
  height: 18px;
  fill: none;
  stroke: #fff;
  stroke-width: 1;
}

.task.running::after {
  content: "";
  position: absolute;
  left: 4px;
  right: 4px;
  bottom: 0;
  height: 2px;
  background: #76b9ed;
}

.task.current {
  background: #4a4a4a;
}

.task.current::after {
  left: 0;
  right: 0;
}

.task-badge {
  position: absolute;
  right: 6px;
  bottom: 5px;
  width: 13px;
  height: 13px;
  border-radius: 50%;
  background: #e8392f;
  font-size: 9px;
  line-height: 13px;
  text-align: center;
}

.task-avatar {
  position: absolute;
  right: 10px;
  bottom: 6px;
  width: 12px;
  height: 12px;
  border-radius: 50%;
  background: #b3360e;
  font-size: 7px;
  line-height: 12px;
  text-align: center;
}

.tray {
  margin-left: auto;
  display: flex;
  align-items: center;
  height: 100%;
  font-size: 13px;
  color: #eee;
}

.weather {
  width: 26px;
  height: 24px;
}

.temp {
  margin-left: 7px;
}

.sky {
  margin-left: 10px;
  width: 75px;
  white-space: nowrap;
}

.tray-icon {
  width: 15px;
  height: 15px;
  margin-left: 9px;
  fill: none;
  stroke: #eee;
  stroke-width: 1;
}

.tray-icon .solid {
  fill: #eee;
  stroke: none;
}

.tray-icon .dot-orange {
  fill: #f6921e;
  stroke: none;
}

.tray-icon.chevron {
  width: 13px;
  margin-left: 23px;
  margin-right: 2px;
}

.clock {
  width: 66px;
  margin-left: 4px;
  display: flex;
  flex-direction: column;
  align-items: center;
  font-size: 11px;
  line-height: 17px;
}

.notify {
  width: 16px;
  height: 16px;
  margin: 0 25px 0 11px;
}
```
